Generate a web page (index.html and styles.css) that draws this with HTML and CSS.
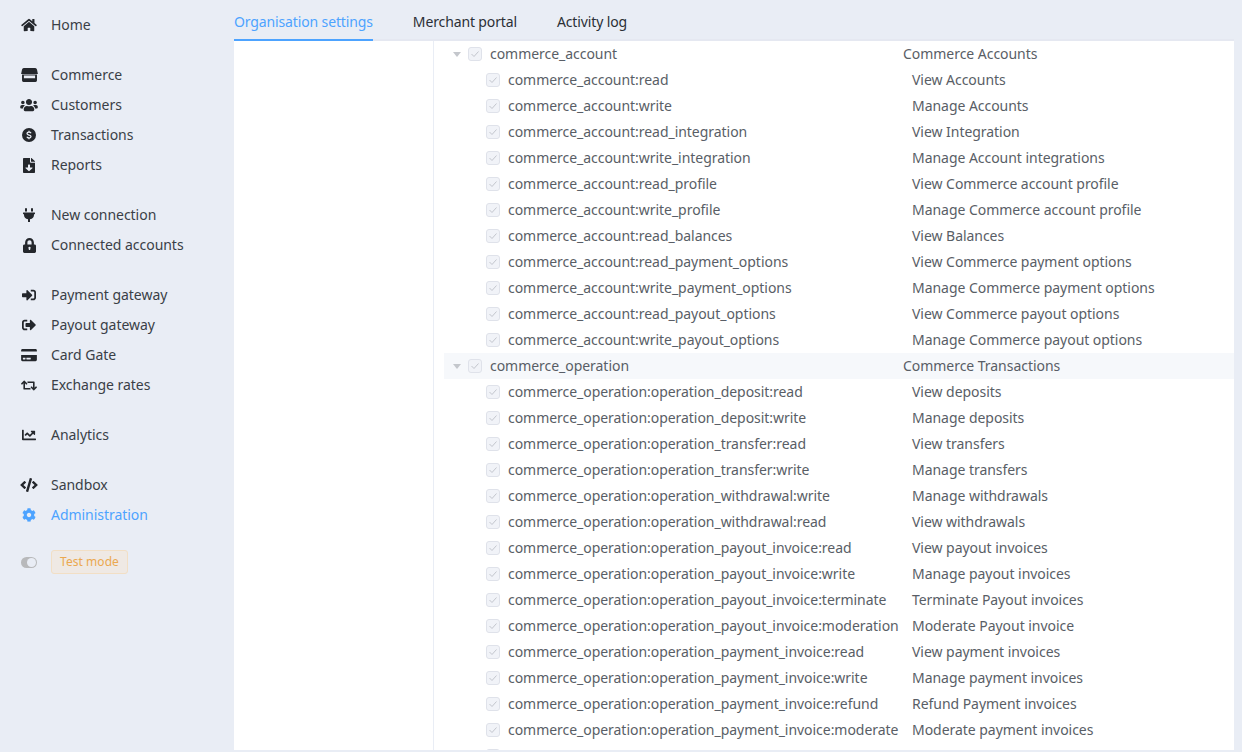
FILE: index.html
```html
<!DOCTYPE html>
<html lang="en">

<head>
    <meta charset="UTF-8">
    <title>Organisation settings</title>
    <link rel="stylesheet" href="styles.css">
</head>

<body>
    <svg class="defs" width="0" height="0">
        <symbol id="tick" viewBox="0 0 10 8"><path d="M1.500 4l2.500 2.500 4.500-5"/></symbol>
    </svg>
    <div class="layout">
        <div class="sidebar">
            <ul class="menu">
                <li><span class="ico"><svg width="16" height="14" viewBox="0 0 576 512"><path d="M280.37 148.26L96 300.11V464a16 16 0 0 0 16 16l112.06-.29a16 16 0 0 0 15.92-16V368a16 16 0 0 1 16-16h64a16 16 0 0 1 16 16v95.64a16 16 0 0 0 16 16.05L464 480a16 16 0 0 0 16-16V300L295.67 148.26a12.19 12.19 0 0 0-15.3 0zM571.6 251.47L488 182.56V44.05a12 12 0 0 0-12-12h-56a12 12 0 0 0-12 12v72.61L318.47 43a48 48 0 0 0-61 0L4.34 251.47a12 12 0 0 0-1.6 16.9l25.5 31A12 12 0 0 0 45.15 301l235.22-193.74a12.19 12.19 0 0 1 15.3 0L530.9 301a12 12 0 0 0 16.9-1.6l25.5-31a12 12 0 0 0-1.7-16.93z"/></svg></span>Home</li>
            </ul>
            <ul class="menu">
                <li><span class="ico"><svg width="17" height="14" viewBox="0 0 18 15"><path d="M3 0h12a2 2 0 0 1 2 1.600L18 6.500H0L1 1.600A2 2 0 0 1 3 0z"/><path fill-rule="evenodd" d="M1 7h16v6.500a1.500 1.500 0 0 1-1.500 1.500h-13A1.500 1.500 0 0 1 1 13.500zM3 8V11h12V8z"/></svg></span>Commerce</li>
                <li><span class="ico"><svg width="18" height="14" viewBox="0 0 640 512"><path d="M96 224c35.300 0 64-28.700 64-64s-28.700-64-64-64-64 28.700-64 64 28.700 64 64 64zm448 0c35.300 0 64-28.700 64-64s-28.700-64-64-64-64 28.700-64 64 28.700 64 64 64zm32 32h-64c-17.600 0-33.500 7.100-45.100 18.600 40.300 22.100 68.900 62 75.100 109.400h66c17.700 0 32-14.300 32-32v-32c0-35.300-28.700-64-64-64zm-256 0c61.900 0 112-50.100 112-112S381.900 32 320 32 208 82.100 208 144s50.100 112 112 112zm76.800 32h-8.300c-20.800 10-43.900 16-68.500 16s-47.600-6-68.500-16h-8.300C179.600 288 128 339.600 128 403.200V432c0 26.500 21.500 48 48 48h288c26.500 0 48-21.500 48-48v-28.800c0-63.600-51.600-115.200-115.200-115.200zm-223.700-13.400C161.500 263.100 145.600 256 128 256H64c-35.300 0-64 28.700-64 64v32c0 17.700 14.300 32 32 32h65.900c6.300-47.400 34.900-87.300 75.200-109.400z"/></svg></span>Customers</li>
                <li><span class="ico"><svg width="14" height="14" viewBox="0 0 14 14"><circle cx="7" cy="7" r="7"/><path d="M9 5.200C8.700 4.500 8 4.100 7 4.100c-1.200 0-2 .6-2 1.500 0 2 4 1 4 2.900 0 .9-.8 1.500-2 1.500-1 0-1.800-.5-2.100-1.200M7 2.800v1.300M7 10v1.200" fill="none" stroke="#e9edf5" stroke-width="1.300"/></svg></span>Transactions</li>
                <li><span class="ico"><svg width="12" height="15" viewBox="0 0 384 512" preserveAspectRatio="none"><path d="M224 136V0H24C10.700 0 0 10.700 0 24v464c0 13.300 10.700 24 24 24h336c13.300 0 24-10.700 24-24V160H248c-13.200 0-24-10.800-24-24zm76.450 211.360l-96.420 95.700c-6.650 6.610-17.390 6.610-24.040 0l-96.420-95.700C73.420 337.290 80.540 320 94.820 320H160v-80c0-8.840 7.160-16 16-16h32c8.840 0 16 7.160 16 16v80h65.180c14.280 0 21.400 17.290 11.270 27.360zM377 105L279.100 7c-4.500-4.500-10.600-7-17-7H256v128h128v-6.100c0-6.300-2.500-12.400-7-16.900z"/></svg></span>Reports</li>
            </ul>
            <ul class="menu">
                <li><span class="ico"><svg width="12" height="14" viewBox="0 0 384 512" preserveAspectRatio="none"><path d="M320,32a32,32,0,0,0-64,0v96h64Zm48,128H16A16,16,0,0,0,0,176v32a16,16,0,0,0,16,16H32v32A160.070,160.070,0,0,0,160,412.800V512h64V412.800A160.070,160.070,0,0,0,352,256V224h16a16,16,0,0,0,16-16V176A16,16,0,0,0,368,160ZM128,32a32,32,0,0,0-64,0v96h64Z"/></svg></span>New connection</li>
                <li><span class="ico"><svg width="13" height="15" viewBox="0 0 448 512" preserveAspectRatio="none"><path fill-rule="evenodd" d="M400 224h-24v-72C376 68.200 307.800 0 224 0S72 68.200 72 152v72H48c-26.500 0-48 21.500-48 48v192c0 26.500 21.500 48 48 48h352c26.500 0 48-21.500 48-48V272c0-26.500-21.500-48-48-48zm-104 0H152v-72c0-39.700 32.300-72 72-72s72 32.300 72 72v72zM224 296a40 40 0 0 0-24 72v40h48v-40a40 40 0 0 0-24-72z"/></svg></span>Connected accounts</li>
            </ul>
            <ul class="menu">
                <li><span class="ico"><svg width="14" height="14" viewBox="0 0 512 512"><path d="M416 448h-84c-6.600 0-12-5.400-12-12v-40c0-6.600 5.400-12 12-12h84c17.700 0 32-14.300 32-32V160c0-17.700-14.300-32-32-32h-84c-6.600 0-12-5.400-12-12V76c0-6.600 5.400-12 12-12h84c53 0 96 43 96 96v192c0 53-43 96-96 96zm-47-201L201 79c-15-15-41-4.500-41 17v96H24c-13.300 0-24 10.700-24 24v96c0 13.300 10.700 24 24 24h136v96c0 21.500 26 32 41 17l168-168c9.300-9.400 9.300-24.600 0-34z"/></svg></span>Payment gateway</li>
                <li><span class="ico"><svg width="14" height="14" viewBox="0 0 512 512"><path d="M497 273L329 441c-15 15-41 4.500-41-17v-96H152c-13.300 0-24-10.700-24-24v-96c0-13.300 10.700-24 24-24h136V88c0-21.400 25.900-32 41-17l168 168c9.300 9.400 9.300 24.600 0 34zM192 436v-40c0-6.600-5.400-12-12-12H96c-17.700 0-32-14.300-32-32V160c0-17.700 14.300-32 32-32h84c6.600 0 12-5.400 12-12V76c0-6.600-5.400-12-12-12H96c-53 0-96 43-96 96v192c0 53 43 96 96 96h84c6.600 0 12-5.400 12-12z"/></svg></span>Payout gateway</li>
                <li><span class="ico"><svg width="16" height="14" viewBox="0 0 576 512"><path d="M0 432c0 26.500 21.500 48 48 48h480c26.500 0 48-21.500 48-48V256H0v176zm192-68c0-6.600 5.400-12 12-12h136c6.600 0 12 5.400 12 12v40c0 6.600-5.400 12-12 12H204c-6.600 0-12-5.400-12-12v-40zm-128 0c0-6.600 5.400-12 12-12h72c6.600 0 12 5.400 12 12v40c0 6.600-5.400 12-12 12H76c-6.600 0-12-5.400-12-12v-40zM576 80v48H0V80c0-26.500 21.500-48 48-48h480c26.500 0 48 21.500 48 48z"/></svg></span>Card Gate</li>
                <li><span class="ico"><svg width="16" height="13" viewBox="0 0 640 512"><path d="M629.657 343.598L528.971 444.284c-9.373 9.372-24.568 9.372-33.941 0L394.343 343.598c-9.373-9.373-9.373-24.569 0-33.941l10.823-10.823c9.562-9.562 25.133-9.340 34.419.492L480 342.118V160H292.451a24.005 24.005 0 0 1-16.971-7.029l-16-16C244.361 121.851 255.069 96 276.451 96H520c13.255 0 24 10.745 24 24v222.118l40.416-42.792c9.285-9.831 24.856-10.054 34.419-.492l10.823 10.823c9.372 9.372 9.372 24.569-.001 33.941zm-265.138 15.431A23.999 23.999 0 0 0 347.548 352H160V169.881l40.416 42.792c9.286 9.831 24.856 10.054 34.419.491l10.822-10.822c9.373-9.373 9.373-24.569 0-33.941L144.971 67.716c-9.373-9.373-24.569-9.373-33.941 0L10.343 168.402c-9.373 9.373-9.373 24.569 0 33.941l10.822 10.822c9.562 9.562 25.133 9.340 34.419-.491L96 169.881V392c0 13.255 10.745 24 24 24h243.549c21.382 0 32.090-25.851 16.971-40.971l-16.001-16z"/></svg></span>Exchange rates</li>
            </ul>
            <ul class="menu">
                <li><span class="ico"><svg width="14" height="14" viewBox="0 0 512 512"><path d="M496 384H64V80c0-8.840-7.160-16-16-16H16C7.160 64 0 71.160 0 80v336c0 17.670 14.330 32 32 32h464c8.840 0 16-7.160 16-16v-32c0-8.840-7.160-16-16-16zM464 96H345.940c-21.380 0-32.090 25.850-16.970 40.970l32.400 32.400L288 242.750l-73.370-73.370c-12.500-12.500-32.760-12.500-45.250 0l-68.690 68.690c-6.250 6.250-6.250 16.380 0 22.630l22.620 22.620c6.250 6.250 16.380 6.250 22.630 0L192 237.250l73.370 73.370c12.500 12.500 32.760 12.500 45.250 0l96-96 32.400 32.400c15.120 15.120 40.970 4.410 40.970-16.970V112c.010-8.840-7.150-16-15.990-16z"/></svg></span>Analytics</li>
            </ul>
            <ul class="menu">
                <li><span class="ico"><svg width="18" height="14" viewBox="0 0 640 512"><path d="M278.900 511.500l-61-17.700c-6.400-1.800-10-8.500-8.200-14.900L346.200 8.700c1.800-6.400 8.500-10 14.900-8.200l61 17.700c6.400 1.800 10 8.500 8.200 14.900L293.800 503.300c-1.900 6.400-8.500 10.100-14.900 8.200zm-114-112.200l43.500-46.400c4.600-4.900 4.300-12.700-.8-17.200L117 256l90.600-79.700c5.100-4.500 5.500-12.300.8-17.200l-43.500-46.400c-4.500-4.800-12.100-5.100-17-.5L3.800 247.200c-5.100 4.700-5.100 12.800 0 17.500l144.100 135.100c4.900 4.600 12.500 4.400 17-.5zm327.200.6l144.100-135.100c5.100-4.700 5.100-12.800 0-17.500L492.100 112.100c-4.800-4.500-12.400-4.300-17 .5L431.600 159c-4.600 4.900-4.300 12.700.8 17.200L523 256l-90.600 79.700c-5.100 4.500-5.500 12.300-.8 17.200l43.500 46.400c4.500 4.900 12.100 5.100 17 .6z"/></svg></span>Sandbox</li>
                <li class="active"><span class="ico"><svg width="14" height="14" viewBox="0 0 512 512"><path d="M487.400 315.700l-42.600-24.600c4.300-23.200 4.300-47 0-70.200l42.600-24.600c4.900-2.800 7.100-8.600 5.500-14-11.100-35.600-30-67.800-54.700-94.600-3.800-4.100-10-5.100-14.800-2.300L380.800 110c-17.900-15.400-38.500-27.300-60.800-35.100V25.800c0-5.600-3.900-10.500-9.400-11.700-36.700-8.200-74.300-7.800-109.200 0-5.500 1.200-9.400 6.100-9.400 11.700V75c-22.200 7.900-42.800 19.800-60.800 35.100L88.700 85.500c-4.900-2.800-11-1.900-14.800 2.300-24.700 26.700-43.600 58.900-54.700 94.600-1.700 5.400.6 11.200 5.500 14L67.300 221c-4.300 23.200-4.300 47 0 70.200l-42.600 24.600c-4.900 2.800-7.100 8.600-5.500 14 11.100 35.600 30 67.800 54.700 94.600 3.800 4.100 10 5.100 14.800 2.300l42.600-24.600c17.900 15.400 38.500 27.300 60.800 35.100v49.200c0 5.600 3.900 10.500 9.400 11.700 36.700 8.200 74.300 7.800 109.200 0 5.500-1.200 9.400-6.100 9.400-11.700v-49.200c22.200-7.900 42.800-19.800 60.800-35.100l42.600 24.600c4.900 2.800 11 1.900 14.800-2.300 24.700-26.700 43.600-58.900 54.700-94.600 1.500-5.500-.7-11.300-5.600-14.100zM256 336c-44.100 0-80-35.900-80-80s35.900-80 80-80 80 35.900 80 80-35.900 80-80 80z"/></svg></span>Administration</li>
            </ul>
            <div class="test-mode">
                <span class="ico"><span class="switch"></span></span>
                <span class="test-tag">Test mode</span>
            </div>
        </div>
        <div class="main">
            <ul class="tabs">
                <li class="selected">Organisation settings</li>
                <li>Merchant portal</li>
                <li>Activity log</li>
            </ul>
            <div class="panel">
                <div class="panel-left"></div>
                <div class="tree">
                    <div class="row group"><span class="arrow"></span><span class="check"><svg width="10" height="8"><use href="#tick"/></svg></span><span class="name">commerce_account</span><span>Commerce Accounts</span></div>
                    <div class="row item"><span class="check"><svg width="10" height="8"><use href="#tick"/></svg></span><span class="name">commerce_account:read</span><span>View Accounts</span></div>
                    <div class="row item"><span class="check"><svg width="10" height="8"><use href="#tick"/></svg></span><span class="name">commerce_account:write</span><span>Manage Accounts</span></div>
                    <div class="row item"><span class="check"><svg width="10" height="8"><use href="#tick"/></svg></span><span class="name">commerce_account:read_integration</span><span>View Integration</span></div>
                    <div class="row item"><span class="check"><svg width="10" height="8"><use href="#tick"/></svg></span><span class="name">commerce_account:write_integration</span><span>Manage Account integrations</span></div>
                    <div class="row item"><span class="check"><svg width="10" height="8"><use href="#tick"/></svg></span><span class="name">commerce_account:read_profile</span><span>View Commerce account profile</span></div>
                    <div class="row item"><span class="check"><svg width="10" height="8"><use href="#tick"/></svg></span><span class="name">commerce_account:write_profile</span><span>Manage Commerce account profile</span></div>
                    <div class="row item"><span class="check"><svg width="10" height="8"><use href="#tick"/></svg></span><span class="name">commerce_account:read_balances</span><span>View Balances</span></div>
                    <div class="row item"><span class="check"><svg width="10" height="8"><use href="#tick"/></svg></span><span class="name">commerce_account:read_payment_options</span><span>View Commerce payment options</span></div>
                    <div class="row item"><span class="check"><svg width="10" height="8"><use href="#tick"/></svg></span><span class="name">commerce_account:write_payment_options</span><span>Manage Commerce payment options</span></div>
                    <div class="row item"><span class="check"><svg width="10" height="8"><use href="#tick"/></svg></span><span class="name">commerce_account:read_payout_options</span><span>View Commerce payout options</span></div>
                    <div class="row item"><span class="check"><svg width="10" height="8"><use href="#tick"/></svg></span><span class="name">commerce_account:write_payout_options</span><span>Manage Commerce payout options</span></div>
                    <div class="row group hl"><span class="arrow"></span><span class="check"><svg width="10" height="8"><use href="#tick"/></svg></span><span class="name">commerce_operation</span><span>Commerce Transactions</span></div>
                    <div class="row item"><span class="check"><svg width="10" height="8"><use href="#tick"/></svg></span><span class="name">commerce_operation:operation_deposit:read</span><span>View deposits</span></div>
                    <div class="row item"><span class="check"><svg width="10" height="8"><use href="#tick"/></svg></span><span class="name">commerce_operation:operation_deposit:write</span><span>Manage deposits</span></div>
                    <div class="row item"><span class="check"><svg width="10" height="8"><use href="#tick"/></svg></span><span class="name">commerce_operation:operation_transfer:read</span><span>View transfers</span></div>
                    <div class="row item"><span class="check"><svg width="10" height="8"><use href="#tick"/></svg></span><span class="name">commerce_operation:operation_transfer:write</span><span>Manage transfers</span></div>
                    <div class="row item"><span class="check"><svg width="10" height="8"><use href="#tick"/></svg></span><span class="name">commerce_operation:operation_withdrawal:write</span><span>Manage withdrawals</span></div>
                    <div class="row item"><span class="check"><svg width="10" height="8"><use href="#tick"/></svg></span><span class="name">commerce_operation:operation_withdrawal:read</span><span>View withdrawals</span></div>
                    <div class="row item"><span class="check"><svg width="10" height="8"><use href="#tick"/></svg></span><span class="name">commerce_operation:operation_payout_invoice:read</span><span>View payout invoices</span></div>
                    <div class="row item"><span class="check"><svg width="10" height="8"><use href="#tick"/></svg></span><span class="name">commerce_operation:operation_payout_invoice:write</span><span>Manage payout invoices</span></div>
                    <div class="row item"><span class="check"><svg width="10" height="8"><use href="#tick"/></svg></span><span class="name">commerce_operation:operation_payout_invoice:terminate</span><span>Terminate Payout invoices</span></div>
                    <div class="row item"><span class="check"><svg width="10" height="8"><use href="#tick"/></svg></span><span class="name">commerce_operation:operation_payout_invoice:moderation</span><span>Moderate Payout invoice</span></div>
                    <div class="row item"><span class="check"><svg width="10" height="8"><use href="#tick"/></svg></span><span class="name">commerce_operation:operation_payment_invoice:read</span><span>View payment invoices</span></div>
                    <div class="row item"><span class="check"><svg width="10" height="8"><use href="#tick"/></svg></span><span class="name">commerce_operation:operation_payment_invoice:write</span><span>Manage payment invoices</span></div>
                    <div class="row item"><span class="check"><svg width="10" height="8"><use href="#tick"/></svg></span><span class="name">commerce_operation:operation_payment_invoice:refund</span><span>Refund Payment invoices</span></div>
                    <div class="row item"><span class="check"><svg width="10" height="8"><use href="#tick"/></svg></span><span class="name">commerce_operation:operation_payment_invoice:moderate</span><span>Moderate payment invoices</span></div>
                    <div class="row item"><span class="check"><svg width="10" height="8"><use href="#tick"/></svg></span></div>
                </div>
            </div>
        </div>
    </div>
</body>

</html>
```

FILE: styles.css
```css
body,
ul,
li {
    padding: 0;
    margin: 0;
}

li {
    list-style: none;
}

body {
    background: #e9edf5;
    color: #3a3f47;
    font-family: "Noto Sans", sans-serif;
    font-size: 14px;
    letter-spacing: -0.04px;
    overflow: hidden;
}

.defs {
    display: none;
}

.layout {
    display: flex;
    height: 752px;
}

.sidebar {
    width: 234px;
    flex: none;
    padding-top: 10px;
    box-sizing: border-box;
}

.menu {
    margin-bottom: 20px;
}

/* text sits 1px above the icon's centre line */
.menu li {
    display: flex;
    align-items: flex-start;
    height: 30px;
    line-height: 29px;
}

.menu li svg {
    fill: #24272c;
    display: block;
}

.menu li.active {
    color: #4da3ff;
}

.menu li.active svg {
    fill: #4da3ff;
}

.ico {
    width: 51px;
    height: 100%;
    padding-left: 7px;
    box-sizing: border-box;
    display: flex;
    align-items: center;
    justify-content: center;
    flex: none;
}

.test-mode {
    display: flex;
    align-items: center;
    height: 24px;
}

.switch {
    width: 16px;
    height: 11px;
    border-radius: 6px;
    background: #b8b9bb;
    position: relative;
}

.switch:after {
    content: "";
    position: absolute;
    right: 1px;
    top: 1px;
    width: 9px;
    height: 9px;
    border-radius: 50%;
    background: #e9edf5;
}

.test-tag {
    height: 24px;
    line-height: 22px;
    padding: 0 8px;
    width: 77px;
    box-sizing: border-box;
    font-size: 12px;
    letter-spacing: 0.05px;
    color: #eba84f;
    background: #efe9e4;
    border: 1px solid #f2dfc5;
    border-radius: 3px;
}

.main {
    width: 1000px;
    flex: none;
    display: flex;
    flex-direction: column;
}

.tabs {
    display: flex;
    gap: 40px;
    height: 41px;
    box-sizing: border-box;
    border-bottom: 2px solid #e5e8f1;
}

.tabs li {
    height: 41px;
    line-height: 43px;
    box-sizing: border-box;
    color: #2b2f36;
    letter-spacing: -0.13px;
}

.tabs li.selected {
    color: #4da3ff;
    border-bottom: 2px solid #4da3ff;
}

.panel {
    flex: none;
    height: 709px;
    background: #fff;
    display: flex;
    overflow: hidden;
}

.panel-left {
    width: 199px;
    flex: none;
    border-right: 1px solid #e9edf5;
}

.tree {
    flex: 1;
    padding-left: 10px;
    overflow: hidden;
    color: #595e66;
}

.row {
    display: flex;
    align-items: flex-start;
    height: 26px;
    line-height: 25px;
}

.row.hl {
    background: #f6f8fb;
}

.arrow {
    width: 0;
    height: 0;
    align-self: center;
    margin: 0 7px 0 9px;
    border-left: 4px solid transparent;
    border-right: 4px solid transparent;
    border-top: 5px solid #c4c7cc;
}

.check {
    width: 14px;
    height: 14px;
    align-self: center;
    box-sizing: border-box;
    border: 1px solid #dfe2ea;
    border-radius: 3px;
    background: #f1f3f8;
    flex: none;
    display: flex;
    align-items: center;
    justify-content: center;
}

.check svg {
    display: block;
    fill: none;
    stroke: #c3c6cd;
    stroke-width: 1;
}

.group .name {
    width: 413px;
    margin-left: 8px;
    flex: none;
}

.item .check {
    margin-left: 42px;
}

.item .name {
    width: 404px;
    margin-left: 8px;
    flex: none;
    white-space: nowrap;
}
```
